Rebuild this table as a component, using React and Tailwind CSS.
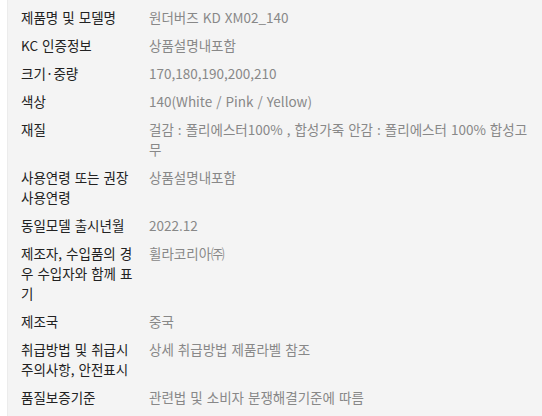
const rows = [
  { label: "제품명 및 모델명", value: "원더버즈 KD XM02_140" },
  { label: "KC 인증정보", value: "상품설명내포함" },
  { label: "크기·중량", value: "170,180,190,200,210" },
  { label: "색상", value: "140(White / Pink / Yellow)" },
  { label: "재질", value: "걸감 : 폴리에스터100% , 합성가죽 안감 : 폴리에스터 100% 합성고무" },
  { label: "사용연령 또는 권장 사용연령", value: "상품설명내포함" },
  { label: "동일모델 출시년월", value: "2022.12" },
  { label: "제조자, 수입품의 경우 수입자와 함께 표기", value: "휠라코리아㈜" },
  { label: "제조국", value: "중국" },
  { label: "취급방법 및 취급시 주의사항, 안전표시", value: "상세 취급방법 제품라벨 참조" },
  { label: "품질보증기준", value: "관련법 및 소비자 분쟁해결기준에 따름" },
];

export default function App() {
  return (
    <div
      className="min-h-screen bg-white pl-[7px]"
      style={{ fontFamily: '"Noto Sans CJK KR", sans-serif' }}
    >
      <div className="min-h-screen bg-[#f4f4f4] border-l border-[#ececec] pt-[3px] pl-[13px] text-[13.5px] leading-5 [word-spacing:1px]">
        {rows.map((row) => (
          <div key={row.label} className="flex py-1">
            <div className="w-[116px] shrink-0 mr-[12px] text-[#222]">{row.label}</div>
            <div className="w-[380px] text-[#888]">{row.value}</div>
          </div>
        ))}
      </div>
    </div>
  );
}
